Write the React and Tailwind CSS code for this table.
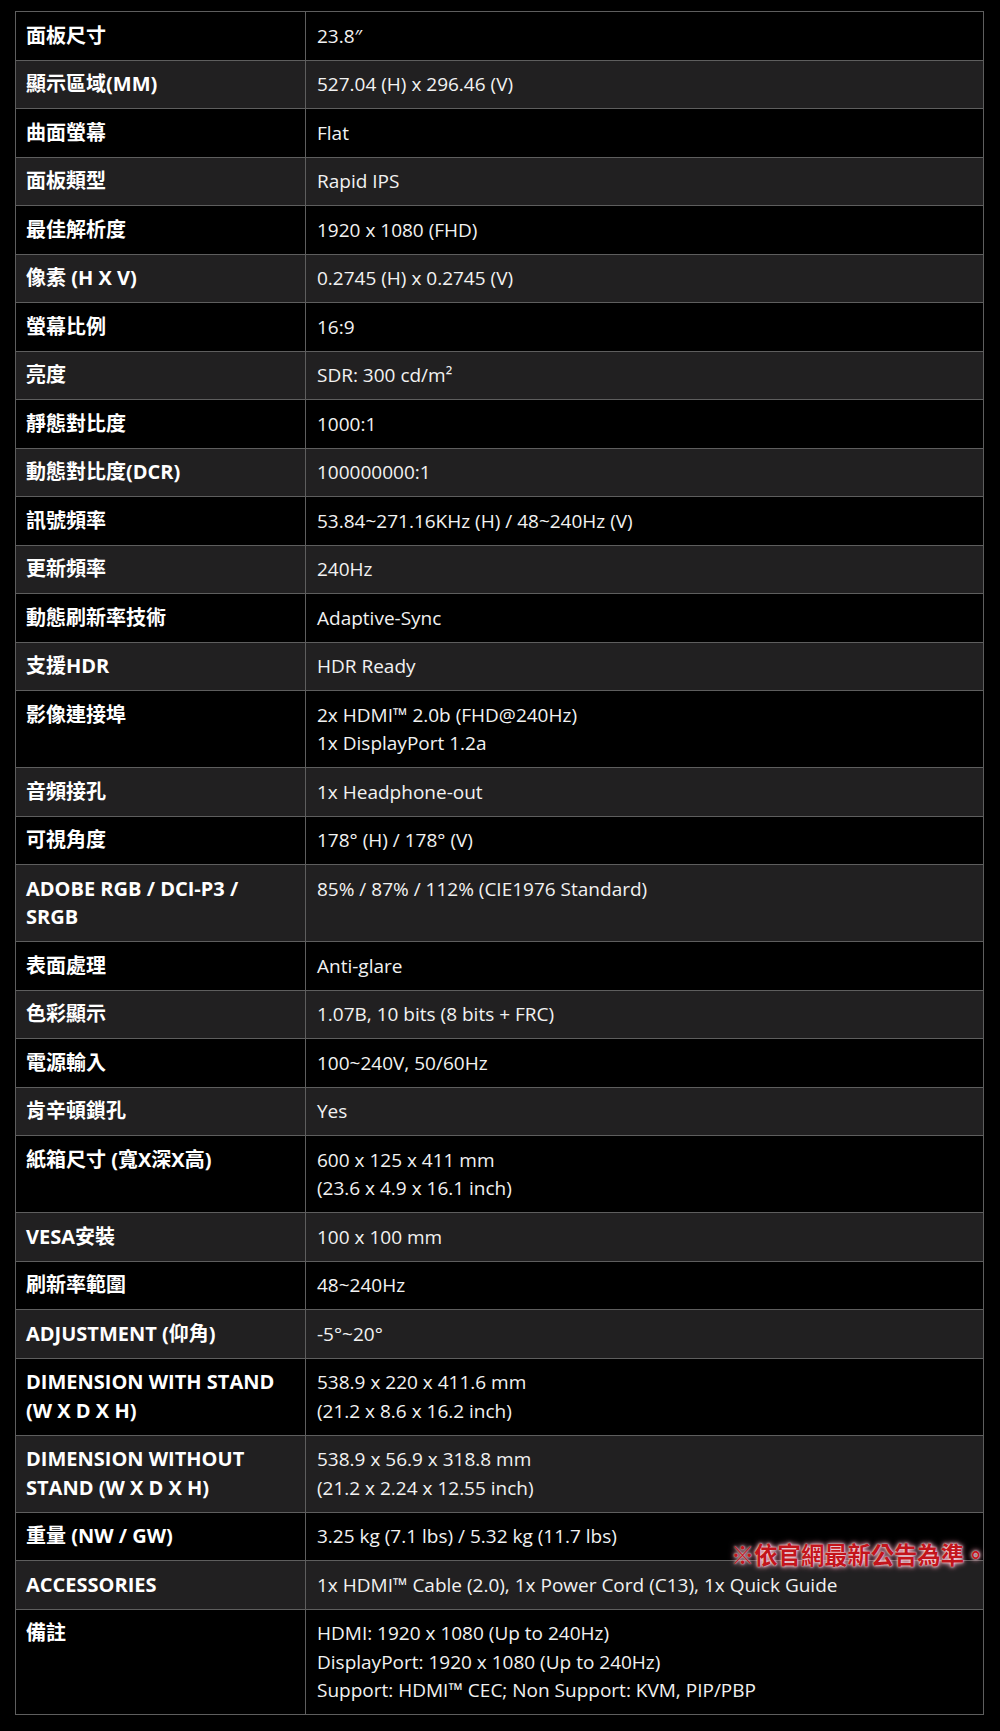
import React from 'react';

const specs = [
  ['面板尺寸', ['23.8″']],
  ['顯示區域(MM)', ['527.04 (H) x 296.46 (V)']],
  ['曲面螢幕', ['Flat']],
  ['面板類型', ['Rapid IPS']],
  ['最佳解析度', ['1920 x 1080 (FHD)']],
  ['像素 (H X V)', ['0.2745 (H) x 0.2745 (V)']],
  ['螢幕比例', ['16:9']],
  ['亮度', ['SDR: 300 cd/m²']],
  ['靜態對比度', ['1000:1']],
  ['動態對比度(DCR)', ['100000000:1']],
  ['訊號頻率', ['53.84~271.16KHz (H) / 48~240Hz (V)']],
  ['更新頻率', ['240Hz']],
  ['動態刷新率技術', ['Adaptive-Sync']],
  ['支援HDR', ['HDR Ready']],
  ['影像連接埠', ['2x HDMI™ 2.0b (FHD@240Hz)', '1x DisplayPort 1.2a']],
  ['音頻接孔', ['1x Headphone-out']],
  ['可視角度', ['178° (H) / 178° (V)']],
  [['ADOBE RGB / DCI-P3 /', 'SRGB'], ['85% / 87% / 112% (CIE1976 Standard)']],
  ['表面處理', ['Anti-glare']],
  ['色彩顯示', ['1.07B, 10 bits (8 bits + FRC)']],
  ['電源輸入', ['100~240V, 50/60Hz']],
  ['肯辛頓鎖孔', ['Yes']],
  ['紙箱尺寸 (寬X深X高)', ['600 x 125 x 411 mm', '(23.6 x 4.9 x 16.1 inch)']],
  ['VESA安裝', ['100 x 100 mm']],
  ['刷新率範圍', ['48~240Hz']],
  ['ADJUSTMENT (仰角)', ['-5°~20°']],
  [['DIMENSION WITH STAND', '(W X D X H)'], ['538.9 x 220 x 411.6 mm', '(21.2 x 8.6 x 16.2 inch)']],
  [['DIMENSION WITHOUT', 'STAND (W X D X H)'], ['538.9 x 56.9 x 318.8 mm', '(21.2 x 2.24 x 12.55 inch)']],
  ['重量 (NW / GW)', ['3.25 kg (7.1 lbs) / 5.32 kg (11.7 lbs)']],
  ['ACCESSORIES', ['1x HDMI™ Cable (2.0), 1x Power Cord (C13), 1x Quick Guide']],
  ['備註', ['HDMI: 1920 x 1080 (Up to 240Hz)', 'DisplayPort: 1920 x 1080 (Up to 240Hz)', 'Support: HDMI™ CEC; Non Support: KVM, PIP/PBP']],
];

const Lines = ({ lines }) =>
  lines.map((line, i) => (
    <React.Fragment key={i}>
      {i > 0 && <br />}
      {line}
    </React.Fragment>
  ));

export default function App() {
  return (
    <div
      className="relative min-h-[1731px] bg-black pt-[11px] pl-[15px]"
      style={{ fontFamily: '"Open Sans", "Noto Sans CJK TC", sans-serif' }}
    >
      <table className="w-[969px] border-collapse border border-[#5e5e5e] text-[19px] leading-[28.5px] text-[#f2f2f2]">
        <tbody>
          {specs.map(([label, value], i) => (
            <tr key={i} className={i % 2 === 1 ? 'bg-[#212021]' : 'bg-black'}>
              <td className="w-[290px] border border-[#5e5e5e] px-[10px] py-[9.5px] align-top text-[20px] font-bold text-white whitespace-nowrap">
                <Lines lines={Array.isArray(label) ? label : [label]} />
              </td>
              <td className="border border-[#5e5e5e] px-[11px] py-[9.5px] align-top whitespace-nowrap">
                <Lines lines={value} />
              </td>
            </tr>
          ))}
        </tbody>
      </table>

      {/* notice stamp over the weight row */}
      <div
        className="absolute left-[731px] top-[1540px] text-[23.3px] leading-[30px] font-bold text-[#c4151c] whitespace-nowrap"
        style={{ textShadow: '0 0 2px #fff, 0 0 4px #ffc0cf, 0 0 6px #ff8fae' }}
      >
        ※依官網最新公告為準。
      </div>
    </div>
  );
}
